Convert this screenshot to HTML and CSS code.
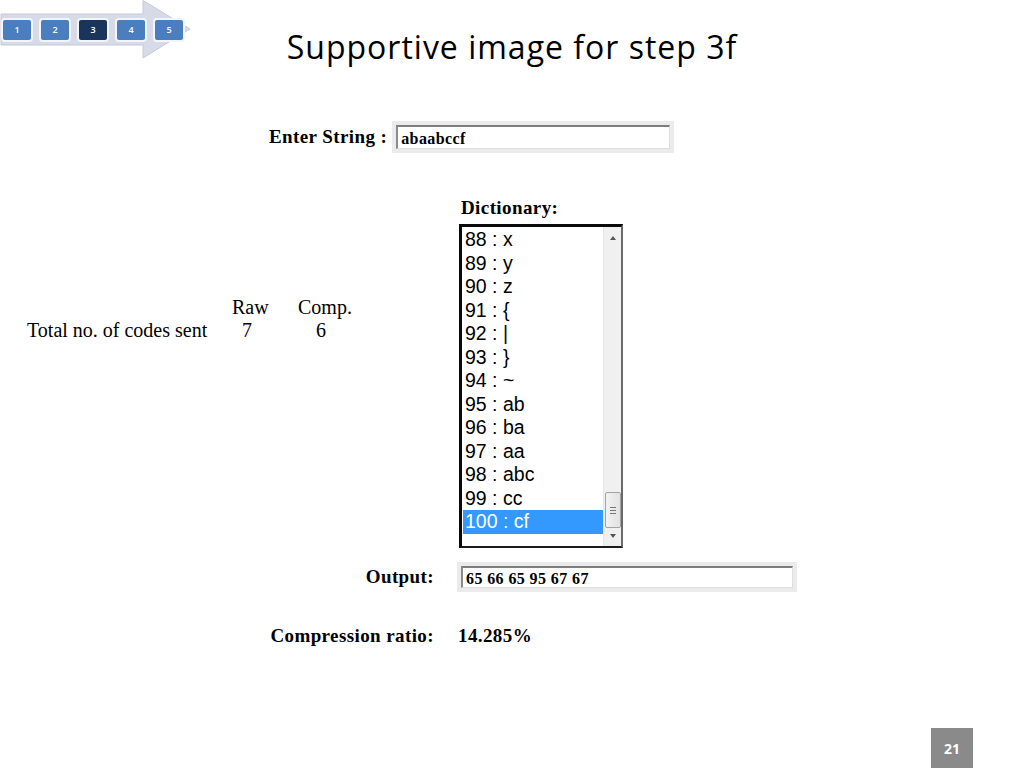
FILE: index.html
```html
<!DOCTYPE html>
<html lang="en">
<head>
<meta charset="utf-8">
<title>Supportive image for step 3f</title>
<link rel="stylesheet" href="styles.css">
</head>
<body>
<div class="slide">
  <header class="top">
    <nav class="steps">
      <svg class="steps-arrow" width="192" height="60" viewBox="0 0 192 60">
        <polygon points="1,14 143,14 143,0.5 190,29 143,58 143,45 1,45" fill="#d7dae7" stroke="#c5c9da" stroke-width="1"/>
      </svg>
      <div class="step">1</div>
      <div class="step">2</div>
      <div class="step step-active">3</div>
      <div class="step">4</div>
      <div class="step">5</div>
    </nav>
    <h1 class="title">Supportive image for step 3f</h1>
    <div></div>
  </header>

  <main class="content">
    <div class="enter-row">
      <span class="lbl">Enter String :</span>
      <div class="field field-enter"><div class="field-in">abaabccf</div></div>
    </div>

    <div class="grid">
      <div class="codes">
        <span></span><span>Raw</span><span>Comp.</span>
        <span>Total no. of codes sent</span><span class="n7">7</span><span class="n6">6</span>
      </div>

      <div class="dict">
        <div class="dict-title lbl">Dictionary:</div>
        <div class="listbox">
          <ul class="items">
            <li>88 : x</li>
            <li>89 : y</li>
            <li>90 : z</li>
            <li>91 : {</li>
            <li>92 : |</li>
            <li>93 : }</li>
            <li>94 : ~</li>
            <li>95 : ab</li>
            <li>96 : ba</li>
            <li>97 : aa</li>
            <li>98 : abc</li>
            <li>99 : cc</li>
            <li class="sel">100 : cf</li>
          </ul>
          <div class="scrollbar">
            <div class="arr arr-up"></div>
            <div class="track"></div>
            <div class="thumb"><i></i><i></i><i></i></div>
            <div class="arr arr-down"></div>
          </div>
        </div>
      </div>

      <div class="lbl out-lbl">Output:</div>
      <div class="field field-out"><div class="field-in">65 66 65 95 67 67</div></div>

      <div class="lbl ratio-lbl">Compression ratio:</div>
      <div class="lbl ratio-val">14.285%</div>
    </div>
  </main>

  <footer class="foot">
    <div class="pagenum">21</div>
  </footer>
</div>
</body>
</html>
```

FILE: styles.css
```css
* { box-sizing: border-box; }

html, body {
  margin: 0;
  padding: 0;
  background: #ffffff;
}

.slide {
  width: 1024px;
  height: 768px;
  display: flex;
  flex-direction: column;
  overflow: hidden;
  background: #ffffff;
  color: #000;
  font-family: "Liberation Serif", "Times New Roman", serif;
}

/* ---------- header ---------- */
.top {
  height: 80px;
  display: grid;
  grid-template-columns: 1fr auto 1fr;
  align-items: start;
}

.steps {
  position: relative;
  width: 192px;
  height: 60px;
  display: flex;
  gap: 6px;
  padding: 18px 0 0 1px;
}

.steps-arrow {
  position: absolute;
  left: 0;
  top: 0;
}

.step {
  position: relative;
  width: 32px;
  height: 24px;
  border: 2px solid #f4f5fa;
  border-radius: 4px;
  background: #4a7ebf;
  color: #fff;
  font-family: "Open Sans", "DejaVu Sans", sans-serif;
  font-weight: 600;
  font-size: 9px;
  line-height: 20px;
  text-align: center;
}

.step-active {
  background: #1a355c;
}

.title {
  margin: 0;
  padding-top: 28px;
  font-family: "Open Sans", "Noto Sans", sans-serif;
  font-weight: 400;
  font-size: 32px;
  letter-spacing: 1px;
  line-height: 1.2;
  white-space: nowrap;
}

/* ---------- content ---------- */
.lbl {
  font-weight: 700;
  font-size: 19px;
  letter-spacing: 0.4px;
  line-height: 22px;
  white-space: nowrap;
}

.enter-row {
  margin-top: 41px;
  height: 32px;
  display: flex;
  align-items: center;
  gap: 5px;
  padding-left: 269px;
}

.field {
  border: 4px solid #ebebeb;
  background: #ffffff;
}

.field-in {
  height: 100%;
  border-top: 2px solid #7d7d7d;
  border-left: 2px solid #8c8c8c;
  border-right: 1px solid #dedede;
  border-bottom: 1px solid #dedede;
  padding-left: 3px;
  font-weight: 700;
  font-size: 16px;
  letter-spacing: 0.4px;
  display: flex;
  align-items: center;
  padding-top: 2px;
}

.field-enter {
  width: 282px;
  height: 32px;
}

.grid {
  margin-top: 44px;
  display: grid;
  grid-template-columns: 434px 1fr;
  column-gap: 24px;
}

.codes {
  padding: 99px 0 0 27px;
  display: grid;
  grid-template-columns: 205px 66px auto;
  align-content: start;
  font-size: 20px;
  line-height: 23px;
}

.codes .n7 { padding-left: 10px; }
.codes .n6 { padding-left: 18px; }

.dict {
  margin-left: 1px;
}

.dict-title {
  padding-left: 2px;
  margin-bottom: 5px;
}

.listbox {
  width: 164px;
  height: 324px;
  display: flex;
  border-top: 3px solid #0a0a0a;
  border-left: 3px solid #0a0a0a;
  border-bottom: 2px solid #1c1c1c;
  border-right: 2px solid #6a6a6a;
  background: #fff;
}

.items {
  flex: 1;
  margin: 0;
  padding: 1px 0 0 1px;
  list-style: none;
  font-family: "Liberation Sans", Arial, sans-serif;
  font-size: 19.5px;
  line-height: 23.5px;
}

.items li {
  padding-left: 2px;
  white-space: nowrap;
}

.items li.sel {
  background: #3399ff;
  color: #ffffff;
}

.scrollbar {
  width: 18px;
  display: flex;
  flex-direction: column;
  align-items: center;
  background: #f0f0f0;
  border-left: 1px solid #e6e6e6;
}

.arr {
  width: 0;
  height: 0;
  border-left: 3.5px solid transparent;
  border-right: 3.5px solid transparent;
}

.arr-up {
  margin-top: 9px;
  border-bottom: 4px solid #555;
}

.arr-down {
  margin: 6px 0 8px;
  border-top: 4px solid #555;
}

.track { flex: 1; }

.thumb {
  width: 16px;
  height: 36px;
  border: 1px solid #a3a3a3;
  border-radius: 2px;
  background: linear-gradient(to right, #f2f2f2, #e2e2e2);
  display: flex;
  flex-direction: column;
  align-items: center;
  justify-content: center;
  gap: 2px;
}

.thumb i {
  display: block;
  width: 6px;
  height: 1px;
  background: #777;
}

.out-lbl {
  margin-top: 14px;
  justify-self: end;
  align-self: center;
}

.field-out {
  margin-top: 14px;
  margin-left: -1px;
  width: 340px;
  height: 30px;
}

.ratio-lbl {
  margin-top: 33px;
  justify-self: end;
}

.ratio-val {
  margin-top: 33px;
}

/* ---------- footer ---------- */
.foot {
  margin-top: auto;
  display: flex;
  justify-content: flex-end;
  padding-right: 51px;
}

.pagenum {
  width: 42px;
  height: 40px;
  background: #8a8a8a;
  color: #ffffff;
  font-family: "Open Sans", "Liberation Sans", sans-serif;
  font-weight: 700;
  font-size: 14px;
  display: flex;
  align-items: center;
  justify-content: center;
}
```
